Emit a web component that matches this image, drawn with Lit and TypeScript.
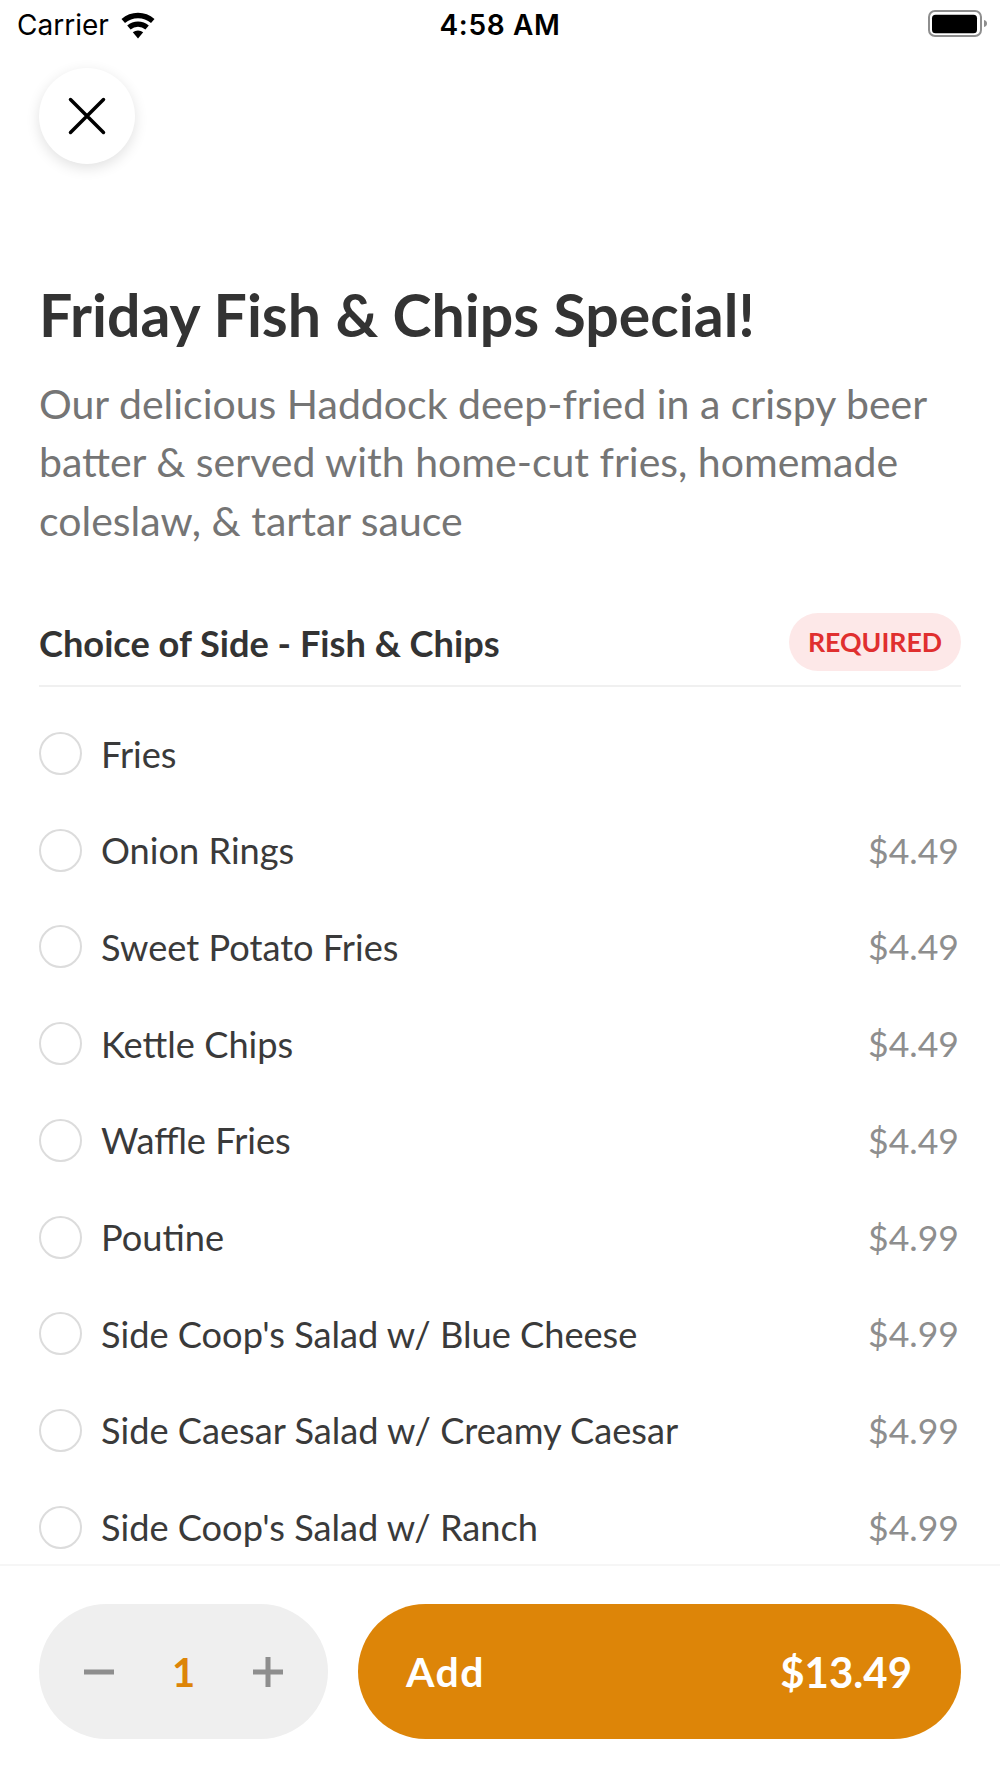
import {LitElement, html, css} from 'lit';
import {customElement} from 'lit/decorators.js';

const OPTIONS = [
  {name: 'Fries', price: ''},
  {name: 'Onion Rings', price: '$4.49'},
  {name: 'Sweet Potato Fries', price: '$4.49'},
  {name: 'Kettle Chips', price: '$4.49'},
  {name: 'Waffle Fries', price: '$4.49'},
  {name: 'Poutine', price: '$4.99'},
  {name: "Side Coop's Salad w/ Blue Cheese", price: '$4.99'},
  {name: 'Side Caesar Salad w/ Creamy Caesar', price: '$4.99'},
  {name: "Side Coop's Salad w/ Ranch", price: '$4.99'},
];

@customElement('app-root')
export class AppRoot extends LitElement {
  static styles = css`
    :host {
      display: flex;
      flex-direction: column;
      width: 1000px;
      height: 1778px;
      overflow: hidden;
      background: #fff;
      color: #333;
      font-family: Lato, sans-serif;
    }

    .status {
      flex: none;
      height: 50px;
      display: grid;
      grid-template-columns: 1fr auto 1fr;
      align-items: center;
      padding: 0 12px 0 17px;
      font-family: Inter, sans-serif;
      color: #000;
    }
    .status-left {
      display: flex;
      align-items: center;
      gap: 10px;
      font-size: 28px;
    }
    .time {
      margin-right: 5px;
      font-size: 28px;
      font-weight: 600;
      letter-spacing: 0.65px;
    }
    .status-right {
      display: flex;
      justify-content: flex-end;
    }

    .scroll {
      flex: 1;
      min-height: 0;
      overflow: hidden;
      padding: 18px 39px 0;
    }
    .close {
      width: 96px;
      height: 96px;
      border-radius: 50%;
      background: #fff;
      box-shadow: 0 4px 14px rgba(0, 0, 0, 0.12);
      display: flex;
      align-items: center;
      justify-content: center;
    }
    h1 {
      margin: 118px 0 0;
      font-size: 59px;
      line-height: 66px;
      font-weight: 700;
      color: #333;
    }
    .desc {
      margin: 27px 0 0;
      font-size: 41px;
      line-height: 58.4px;
      color: #757575;
    }
    .group {
      display: flex;
      align-items: center;
      justify-content: space-between;
      margin-top: 63px;
      padding-bottom: 14px;
      border-bottom: 2px solid #f0f0f0;
    }
    .group-title {
      padding-top: 2px;
      font-size: 36.2px;
      font-weight: 700;
      color: #333;
    }
    .badge {
      width: 172px;
      height: 58px;
      border-radius: 29px;
      background: #fde8e8;
      color: #e02f2f;
      font-size: 26.7px;
      font-weight: 700;
      display: flex;
      align-items: center;
      justify-content: center;
    }
    .list {
      padding-top: 18px;
    }
    .row {
      height: 96.7px;
      display: flex;
      align-items: center;
      font-size: 36.2px;
      color: #3a3a3a;
    }
    .radio {
      flex: none;
      box-sizing: border-box;
      width: 43px;
      height: 43px;
      border-radius: 50%;
      border: 2px solid #dcdcdc;
      margin-right: 19px;
    }
    .name {
      flex: 1;
    }
    .price {
      color: #8e8e8e;
      font-size: 35.6px;
      padding-right: 2px;
    }

    .footer {
      flex: none;
      height: 214px;
      box-sizing: border-box;
      border-top: 2px solid #f6f6f6;
      padding: 38px 39px 0;
      display: flex;
      gap: 30px;
      align-items: flex-start;
    }
    .stepper {
      flex: none;
      box-sizing: border-box;
      width: 289px;
      height: 135px;
      border-radius: 68px;
      background: #efefef;
      display: flex;
      align-items: center;
      justify-content: space-between;
      padding: 0 45px;
    }
    .qty {
      font-size: 40px;
      font-weight: 700;
      color: #dd8508;
    }
    .add {
      flex: 1;
      box-sizing: border-box;
      height: 135px;
      border-radius: 68px;
      background: #dd8508;
      color: #fff;
      display: flex;
      align-items: center;
      justify-content: space-between;
      padding: 0 49px 0 48px;
      font-size: 42px;
      font-weight: 700;
    }
    .add-label {
      font-size: 41px;
      letter-spacing: 1.5px;
    }
  `;

  render() {
    return html`
      <div class="status">
        <div class="status-left">
          <span>Carrier</span>
          <svg width="38" height="27" viewBox="0 0 36 27">
            <path d="M18 26.500l-5.200-6.200a8 8 0 0 1 10.400 0z" fill="#000" />
            <path d="M10.600 17.600l-3.400-4a16.600 16.600 0 0 1 21.600 0l-3.400 4a11.400 11.400 0 0 0-14.800 0z" fill="#000" />
            <path d="M5 11L1.500 7a25.200 25.200 0 0 1 33 0L31 11a20 20 0 0 0-26 0z" fill="#000" />
          </svg>
        </div>
        <div class="time">4:58 AM</div>
        <div class="status-right">
          <svg width="60" height="30" viewBox="0 0 60 30">
            <rect x="1" y="1" width="52" height="25" rx="6" fill="none" stroke="#8e8e8e" stroke-width="2" />
            <rect x="4" y="4.700" width="45" height="18.600" rx="3.500" fill="#000" />
            <path d="M56 10c2 .6 3 1.800 3 3.500s-1 2.900-3 3.500z" fill="#8e8e8e" />
          </svg>
        </div>
      </div>
      <div class="scroll">
        <div class="close">
          <svg width="38" height="38" viewBox="0 0 38 38">
            <path d="M2.500 2.500l33 33M35.500 2.500l-33 33" stroke="#000" stroke-width="3.500" stroke-linecap="round" fill="none" />
          </svg>
        </div>
        <h1>Friday Fish &amp; Chips Special!</h1>
        <p class="desc">
          Our delicious Haddock deep-fried in a crispy beer<br />batter &amp; served with home-cut fries, homemade<br />coleslaw, &amp; tartar sauce
        </p>
        <div class="group">
          <span class="group-title">Choice of Side - Fish &amp; Chips</span>
          <span class="badge">REQUIRED</span>
        </div>
        <div class="list">
          ${OPTIONS.map(
            (o) => html`
              <div class="row">
                <span class="radio"></span>
                <span class="name">${o.name}</span>
                <span class="price">${o.price}</span>
              </div>
            `
          )}
        </div>
      </div>
      <div class="footer">
        <div class="stepper">
          <svg width="30" height="30" viewBox="0 0 30 30">
            <rect y="12.500" width="30" height="5" fill="#8e8e8e" />
          </svg>
          <span class="qty">1</span>
          <svg width="30" height="30" viewBox="0 0 30 30">
            <path d="M0 12.500h12.500V0h5v12.500H30v5H17.500V30h-5V17.500H0z" fill="#8e8e8e" />
          </svg>
        </div>
        <div class="add">
          <span class="add-label">Add</span>
          <span>$13.49</span>
        </div>
      </div>
    `;
  }
}
